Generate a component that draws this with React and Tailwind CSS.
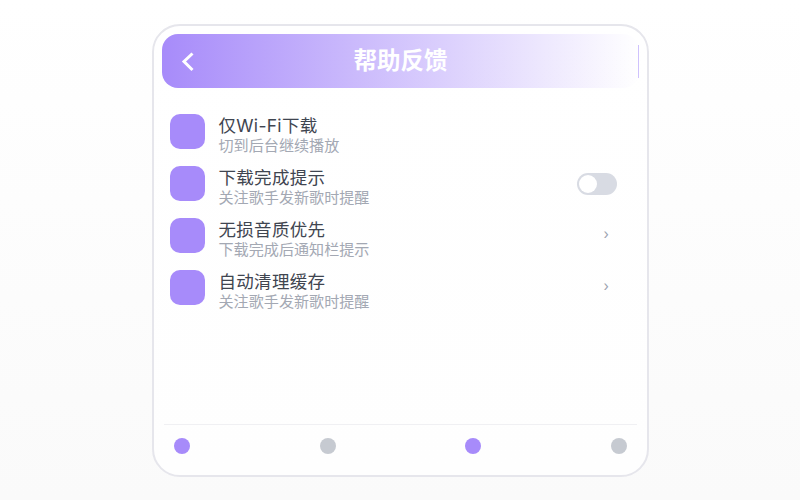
const rows = [
  { t: "仅Wi-Fi下载", s: "切到后台继续播放" },
  { t: "下载完成提示", s: "关注歌手发新歌时提醒", r: "toggle" },
  { t: "无损音质优先", s: "下载完成后通知栏提示", r: "chev" },
  { t: "自动清理缓存", s: "关注歌手发新歌时提醒", r: "chev" },
];

export default function App() {
  return (
    <div className="w-[800px] h-[500px] overflow-hidden flex items-start justify-center pt-6 pl-px bg-gradient-to-b from-white to-[#fafafa] font-['Inter','Noto_Sans_CJK_SC',sans-serif]">
      <div className="w-[497px] h-[453px] rounded-[28px] border-2 border-[#e6e6ec] bg-gradient-to-b from-white to-[#fefefe] px-2 pt-2 flex flex-col">
        <div className="h-[54px] rounded-2xl bg-gradient-to-r from-[#a78bfa] to-transparent flex items-center relative">
          <svg className="ml-[16px]" width="18" height="24" viewBox="0 0 18 24" fill="none">
            <path d="M14.5 4.5 L6 12.5 L14.5 21" stroke="#fff" strokeWidth="3" />
          </svg>
          <div className="absolute inset-0 flex items-center justify-center pb-px text-[23.5px] font-bold text-white">帮助反馈</div>
          <div className="absolute right-0 top-[11px] h-[33px] w-px bg-[#cfc2fd]" />
        </div>
        <div className="flex flex-col mt-[26px] pl-2 pr-[22px]">
          {rows.map((r) => (
            <div key={r.t} className="h-[52px] flex items-start">
              <div className="w-[35px] h-[35px] rounded-[10px] bg-[#a78bfa] shrink-0" />
              <div className="ml-[13.5px] flex-1 flex flex-col">
                <div className="text-[17.5px] leading-[24px] text-[#3f4550] tracking-[0.3px]">{r.t}</div>
                <div className="text-[15.1px] leading-[15px] text-[#a3a8b3]">{r.s}</div>
              </div>
              {r.r === "toggle" && (
                <div className="mt-[7px] w-[40px] h-[22px] rounded-full bg-[#d8dbe3] p-[2px]">
                  <div className="w-[18px] h-[18px] rounded-full bg-white" />
                </div>
              )}
              {r.r === "chev" && (
                <div className="mt-[9px] mr-[8px] text-[#9ca3af] text-[14px] leading-[14px]">›</div>
              )}
            </div>
          ))}
        </div>
        <div className="mt-auto mb-[21px] mx-[2px] border-t border-[#f0f0f3] pt-[13px] px-[10px] flex justify-between">
          <div className="w-4 h-4 rounded-full bg-[#a78bfa]" />
          <div className="w-4 h-4 rounded-full bg-[#c6cad1]" />
          <div className="w-4 h-4 rounded-full bg-[#a78bfa]" />
          <div className="w-4 h-4 rounded-full bg-[#c6cad1]" />
        </div>
      </div>
    </div>
  );
}
